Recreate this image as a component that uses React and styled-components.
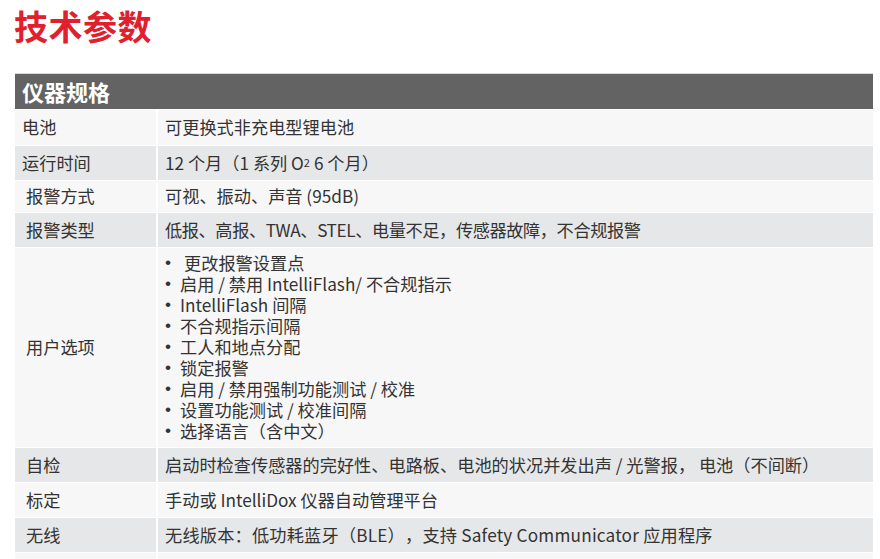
import React from "react";
import styled, { createGlobalStyle } from "styled-components";

const Global = createGlobalStyle`
  html, body { margin: 0; padding: 0; background: #ffffff; }
  body {
    font-family: "Noto Sans CJK SC", "Noto Sans", sans-serif;
    color: #333333;
    text-spacing-trim: space-all;
    text-autospace: no-autospace;
  }
`;

const Page = styled.div`
  width: 880px;
  height: 559px;
  overflow: hidden;
  padding: 0 7px 0 15px;
  box-sizing: border-box;
`;

const Title = styled.h1`
  margin: 0 0 0 -1px;
  padding-top: 4px;
  height: 73px;
  box-sizing: border-box;
  font-family: "Noto Sans CJK SC", sans-serif;
  font-size: 34px;
  line-height: 44px;
  font-weight: 700;
  color: #e0202c;
  letter-spacing: 0.5px;
`;

const Table = styled.div`
  display: grid;
  grid-template-columns: 141px 1fr;
  column-gap: 2px;
  row-gap: 1px;
  border-top: 1px solid #d8d8d8;
`;

const Header = styled.div`
  grid-column: 1 / -1;
  height: 35px;
  background: #636363;
  color: #ffffff;
  font-weight: 700;
  font-size: 22px;
  display: flex;
  align-items: center;
  padding: 0 0 1px 7px;
  box-sizing: border-box;
`;

const Cell = styled.div`
  background: ${(p) => (p.$shade ? "#e6e7e8" : "#f7f7f7")};
  height: ${(p) => p.$h}px;
  box-sizing: border-box;
  padding-bottom: 2px;
  display: flex;
  align-items: center;
  font-size: 17.2px;
  white-space: nowrap;
  color: #333333;
  letter-spacing: ${(p) => p.$track || 0}px;
`;

const Label = styled(Cell)`
  padding-left: ${(p) => (p.$indent ? 11 : 7)}px;
`;

const Value = styled(Cell)`
  padding-left: 7px;
`;

const List = styled.ul`
  list-style: none;
  margin: 0;
  padding: 0;
  line-height: 21px;
`;

const Item = styled.li`
  display: flex;
  padding-left: ${(p) => (p.$extra ? 4 : 0)}px;
  &::before {
    content: "•";
    font-family: "Liberation Sans", sans-serif;
    width: 15px;
    flex: none;
    margin-right: ${(p) => (p.$extra ? 4 : 0)}px;
    margin-left: ${(p) => (p.$extra ? -4 : 0)}px;
  }
`;

const Sub = styled.sub`
  font-size: 11px;
  vertical-align: -4px;
  line-height: 0;
  margin-right: 4px;
`;

const rows = [
  { label: "电池", value: "可更换式非充电型锂电池", h: 35 },
  {
    label: "运行时间",
    value: (
      <>
        12 个月（1 系列 O<Sub>2</Sub>6 个月）
      </>
    ),
    h: 34,
  },
  { label: "报警方式", value: "可视、振动、声音 (95dB)", h: 31, indent: true },
  { label: "报警类型", value: "低报、高报、TWA、STEL、电量不足，传感器故障，不合规报警", h: 34, indent: true, track: -0.4 },
];

const options = [
  "更改报警设置点",
  "启用 / 禁用 IntelliFlash/ 不合规指示",
  "IntelliFlash 间隔",
  "不合规指示间隔",
  "工人和地点分配",
  "锁定报警",
  "启用 / 禁用强制功能测试 / 校准",
  "设置功能测试 / 校准间隔",
  "选择语言（含中文）",
];

const rows2 = [
  { label: "自检", value: "启动时检查传感器的完好性、电路板、电池的状况并发出声 / 光警报， 电池（不间断）", h: 34 },
  { label: "标定", value: "手动或 IntelliDox 仪器自动管理平台", h: 34 },
  { label: "无线", value: "无线版本：低功耗蓝牙（BLE），支持 Safety Communicator 应用程序", h: 34, track: 0.2 },
  { label: "", value: "", h: 34 },
];

export default function App() {
  return (
    <Page>
      <Global />
      <Title>技术参数</Title>
      <Table>
        <Header>仪器规格</Header>
        {rows.map((r, k) => {
          const shade = k % 2 === 1;
          return (
            <React.Fragment key={r.label}>
              <Label $shade={shade} $h={r.h} $indent={r.indent}>{r.label}</Label>
              <Value $shade={shade} $h={r.h} $track={r.track}>{r.value}</Value>
            </React.Fragment>
          );
        })}
        <Label $h={199} $indent>用户选项</Label>
        <Value $h={199}>
          <List>
            {options.map((o, k) => (
              <Item key={o} $extra={k === 0}>{o}</Item>
            ))}
          </List>
        </Value>
        {rows2.map((r, k) => {
          const shade = k % 2 === 0;
          return (
            <React.Fragment key={k}>
              <Label $shade={shade} $h={r.h} $indent>{r.label}</Label>
              <Value $shade={shade} $h={r.h} $track={r.track}>{r.value}</Value>
            </React.Fragment>
          );
        })}
      </Table>
    </Page>
  );
}
